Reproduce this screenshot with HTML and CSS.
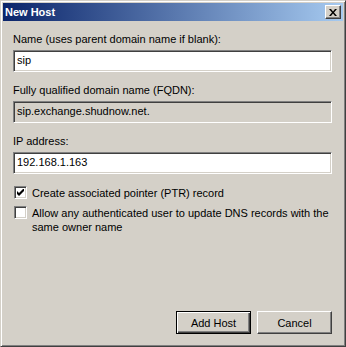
FILE: index.html
```html
<!DOCTYPE html>
<html lang="en">
<head>
  <meta charset="UTF-8">
  <title>New Host</title>
  <link rel="stylesheet" href="styles.css">
</head>
<body>
  <div class="window">
    <div class="titlebar">
      <span class="title">New Host</span>
      <button class="close" aria-label="Close">
        <svg width="8" height="7" viewBox="0 0 8 7"><path d="M0 0h2l2 2.5 2-2.5h2L5 3.5 8 7H6L4 4.5 2 7H0l3-3.5z" fill="#000"/></svg>
      </button>
    </div>

    <div class="content">
      <label class="label">Name (uses parent domain name if blank):</label>
      <div class="field">sip</div>

      <label class="label">Fully qualified domain name (FQDN):</label>
      <div class="field readonly">sip.exchange.shudnow.net.</div>

      <label class="label">IP address:</label>
      <div class="field">192.168.1.163</div>

      <div class="check-row">
        <span class="checkbox">
          <svg width="7" height="7" viewBox="0 0 7 7"><path d="M0 2v3l2 2 5-5V-1L2 4z" fill="#000"/></svg>
        </span>
        <span>Create associated pointer (PTR) record</span>
      </div>
      <div class="check-row">
        <span class="checkbox"></span>
        <span>Allow any authenticated user to update DNS records with the same owner name</span>
      </div>

      <div class="buttons">
        <button class="btn default">Add Host</button>
        <button class="btn">Cancel</button>
      </div>
    </div>
  </div>
</body>
</html>
```

FILE: styles.css
```css
:root {
  --face: #D4D0C8;
  --shadow: #808080;
  --dark: #404040;
}

body {
  margin: 0;
  font-family: Tahoma, 'Liberation Sans', sans-serif;
  font-size: 11px;
  color: #000;
  background: var(--face);
}

.window {
  box-sizing: border-box;
  width: 346px;
  height: 347px;
  background: var(--face);
  border-top: 1px solid var(--face);
  border-left: 1px solid var(--face);
  border-right: 1px solid var(--dark);
  border-bottom: 1px solid var(--dark);
  box-shadow: inset 1px 1px 0 #fff, inset -1px -1px 0 var(--shadow);
  padding: 2px;
  display: flex;
  flex-direction: column;
}

.titlebar {
  height: 18px;
  display: flex;
  align-items: center;
  justify-content: space-between;
  padding: 0 2px 0 1px;
  background: linear-gradient(to right, #0A246A, #A6CAF0);
}

.title {
  color: #fff;
  font-weight: bold;
  font-size: 11px;
  margin-left: 1px;
}

.close {
  box-sizing: border-box;
  width: 16px;
  height: 14px;
  padding: 0;
  background: var(--face);
  border: 1px solid;
  border-color: #fff var(--dark) var(--dark) #fff;
  box-shadow: inset -1px -1px 0 var(--shadow);
  display: flex;
  align-items: center;
  justify-content: center;
}

.content {
  flex: 1;
  display: flex;
  flex-direction: column;
  padding: 12px 11px 10px 10px;
}

.label {
  line-height: 13px;
  margin-bottom: 4px;
}

.field {
  box-sizing: border-box;
  height: 22px;
  line-height: 18px;
  padding: 0 3px;
  background: #fff;
  border: 1px solid;
  border-color: var(--shadow) #fff #fff var(--shadow);
  box-shadow: inset 1px 1px 0 var(--dark), inset -1px -1px 0 var(--face);
  margin-bottom: 12px;
}

.field.readonly {
  background: var(--face);
}

.check-row {
  display: flex;
  align-items: flex-start;
  gap: 5px;
  line-height: 14px;
  padding-left: 1px;
  margin-bottom: 6px;
}

.checkbox {
  box-sizing: border-box;
  flex: none;
  width: 13px;
  height: 13px;
  background: #fff;
  border: 1px solid;
  border-color: var(--shadow) #fff #fff var(--shadow);
  box-shadow: inset 1px 1px 0 var(--dark), inset -1px -1px 0 var(--face);
  display: flex;
  align-items: center;
  justify-content: center;
}

.buttons {
  margin-top: auto;
  display: flex;
  justify-content: flex-end;
  gap: 6px;
}

.btn {
  box-sizing: border-box;
  width: 75px;
  height: 23px;
  font: inherit;
  color: #000;
  background: var(--face);
  border: 1px solid;
  border-color: #fff var(--dark) var(--dark) #fff;
  box-shadow: inset -1px -1px 0 var(--shadow);
  padding: 0;
}

.btn.default {
  border: 1px solid #000;
  box-shadow: inset 1px 1px 0 #fff, inset -1px -1px 0 var(--dark), inset -2px -2px 0 var(--shadow);
}
```
